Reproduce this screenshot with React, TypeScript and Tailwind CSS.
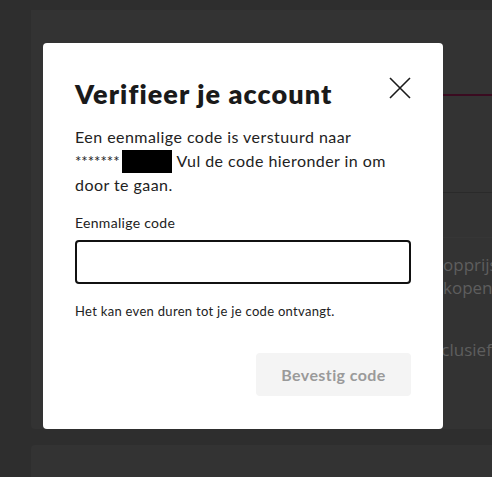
import React, { useState } from 'react';

const App: React.FC = () => {
  const [code, setCode] = useState('');

  return (
    <div className="relative h-screen w-full overflow-hidden bg-[#2e2e2e] font-['Lato',sans-serif]">
      {/* dimmed page behind the dialog */}
      <div className="ml-[31px] mt-[10px] h-[419px] rounded-bl-[4px] bg-[#333333]">
        <div className="h-[84px]" />
        <div className="ml-[412px] h-[2px] bg-[#3a0b20]" />
        <div className="h-[96px]" />
        <div className="ml-[412px] h-px bg-[#2a2a2a]" />
        <div className="h-[44px]" />
        <div className="ml-[412px] h-px bg-[#363636]" />
        <div className="ml-[412px] pt-[15px] font-['Open_Sans',sans-serif] text-[17px] leading-[23px] text-[#5e5e5e] whitespace-nowrap">
          <div>opprijs</div>
          <div>kopen</div>
          <div className="ml-[-20px] mt-[39px]">Exclusief</div>
        </div>
      </div>
      <div className="ml-[31px] mt-[16px] h-[40px] rounded-tl-[4px] bg-[#333333]" />

      {/* dialog */}
      <div className="absolute left-[43px] top-[43px] flex h-[386px] w-[400px] flex-col rounded-[4px] bg-white px-[32px] pt-[30px] text-[#222222]">
        <div className="flex items-start justify-between">
          <h1 className="text-[27px] font-extrabold leading-[42px] tracking-[1.1px] text-[#1a1a1a]">
            Verifieer je account
          </h1>
          <button className="mr-[-1px] mt-[3px] text-[#1a1a1a]" aria-label="Sluiten">
            <svg width="24" height="24" viewBox="0 0 24 24" fill="none" stroke="currentColor" strokeWidth="1.6">
              <path d="M2 2 L22 22 M22 2 L2 22" />
            </svg>
          </button>
        </div>

        <p className="mt-[10px] text-[16px] leading-[24px] tracking-[0.45px]">
          Een eenmalige code is verstuurd naar
          <br />
          <span className="text-[15px] tracking-normal">*******</span>
          <span className="ml-[2px] mr-[1px] inline-block h-[23px] w-[50px] bg-black align-[-6px]" /> Vul de code hieronder in om
          door te gaan.
        </p>

        <label className="mt-[16px] text-[14px] leading-[20px] tracking-[0.3px]" htmlFor="code">
          Eenmalige code
        </label>
        <input
          id="code"
          value={code}
          onChange={(e) => setCode(e.target.value)}
          className="mt-[7px] h-[44px] w-full rounded-[4px] border-2 border-[#111111] px-3 text-[16px] outline-none"
        />

        <p className="mt-[17px] text-[13px] leading-[20px] tracking-[0.3px]">Het kan even duren tot je je code ontvangt.</p>

        <div className="mt-[32px] flex justify-end">
          <button
            disabled
            className="h-[43px] w-[155px] rounded-[4px] bg-[#f4f4f4] text-[16px] font-bold tracking-[0.4px] text-[#9a9a9a]"
          >
            Bevestig code
          </button>
        </div>
      </div>
    </div>
  );
};

export default App;
